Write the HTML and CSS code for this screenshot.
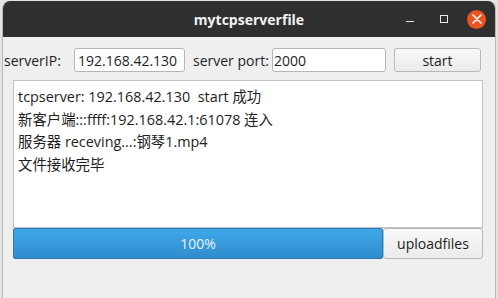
FILE: index.html
```html
<!DOCTYPE html>
<html lang="zh">
<head>
    <meta charset="UTF-8">
    <meta name="viewport" content="width=device-width, initial-scale=1.0">
    <title>mytcpserverfile</title>
    <link rel="stylesheet" href="styles.css">
</head>
<body>
    <div class="window">
        <div class="titlebar">
            <span></span>
            <span class="title">mytcpserverfile</span>
            <div class="controls">
                <span class="btn-min"></span>
                <span class="btn-max"></span>
                <span class="btn-close">
                    <svg width="10" height="10" viewBox="0 0 10 10"><path d="M1 1L9 9M9 1L1 9" stroke="#fff" stroke-width="1.6" stroke-linecap="round"/></svg>
                </span>
            </div>
        </div>

        <div class="content">
            <!-- 接続設定の行 -->
            <div class="row">
                <label class="lbl-ip">serverIP:</label>
                <input class="field field-ip" type="text" value="192.168.42.130">
                <label class="lbl-port">server port:</label>
                <input class="field field-port" type="text" value="2000">
                <button class="btn btn-start">start</button>
            </div>

            <!-- ログ表示 -->
            <div class="log">
                <div>tcpserver: 192.168.42.130&nbsp; start 成功</div>
                <div>新客户端:::ffff:192.168.42.1:61078 连入</div>
                <div>服务器 receving...:钢琴1.mp4</div>
                <div>文件接收完毕</div>
            </div>

            <div class="bottom">
                <div class="progress">100%</div>
                <button class="btn btn-upload">uploadfiles</button>
            </div>
        </div>
    </div>
</body>
</html>
```

FILE: styles.css
```css
body {
    margin: 0;
    background: #e4e4e4;
    font-family: "Open Sans", "Noto Sans CJK SC", sans-serif;
    font-size: 14px;
    color: #1e1e1e;
}
.window {
    width: 492px;
    height: 297px;
    margin: 1px 0 0 2px;
    background: #efefef;
    border-left: 1px solid #b9b9b9;
    border-right: 1px solid #b9b9b9;
    border-radius: 8px 8px 0 0;
    overflow: hidden;
}
.titlebar {
    height: 36px;
    background: #2f2f2f;
    display: grid;
    grid-template-columns: 1fr auto 1fr;
    align-items: center;
}
.title {
    color: #f2f2f2;
    font-weight: bold;
    font-size: 14px;
}
.controls {
    display: flex;
    justify-content: flex-end;
    align-items: center;
    padding-right: 9px;
}
.btn-min {
    width: 8px;
    height: 1px;
    margin-top: 4px;
    background: #e8e8e8;
}
.btn-max {
    width: 6px;
    height: 6px;
    border: 1px solid #e8e8e8;
    margin-left: 26px;
}
.btn-close {
    width: 19px;
    height: 19px;
    margin-left: 19px;
    border-radius: 50%;
    background: #e95420;
    display: flex;
    align-items: center;
    justify-content: center;
}
.content {
    padding: 11px 0 0 1px;
}
.row {
    display: flex;
    align-items: center;
    height: 24px;
}
.lbl-ip {
    width: 70px;
}
.lbl-port {
    width: 79px;
    padding-left: 8px;
}
.field {
    box-sizing: border-box;
    height: 24px;
    border: 1px solid #b6b6b6;
    border-radius: 3px;
    background: #fff;
    font: inherit;
    color: #1e1e1e;
    padding: 0 3px;
}
.field-ip {
    width: 111px;
}
.field-port {
    width: 114px;
    padding: 0 1px;
}
.btn {
    box-sizing: border-box;
    border: 1px solid #b8b8b8;
    border-radius: 3px;
    background: linear-gradient(#f8f8f8, #ebebeb);
    font: inherit;
    color: #1e1e1e;
}
.btn-start {
    width: 87px;
    height: 24px;
    margin-left: 8px;
}
.log {
    box-sizing: border-box;
    width: 470px;
    height: 148px;
    margin: 8px 0 0 9px;
    padding: 5px 4px;
    background: #fff;
    border: 1px solid #c4c4c4;
    font-size: 14.4px;
    line-height: 22.5px;
}
.bottom {
    display: flex;
    margin-left: 9px;
    height: 31px;
}
.progress {
    box-sizing: border-box;
    width: 370px;
    border: 1px solid #2a78b4;
    border-radius: 2px;
    background: linear-gradient(#3fa8ea, #2f8ccd);
    color: #eaf4fb;
    display: flex;
    align-items: center;
    justify-content: center;
}
.btn-upload {
    width: 100px;
    height: 31px;
}
```
